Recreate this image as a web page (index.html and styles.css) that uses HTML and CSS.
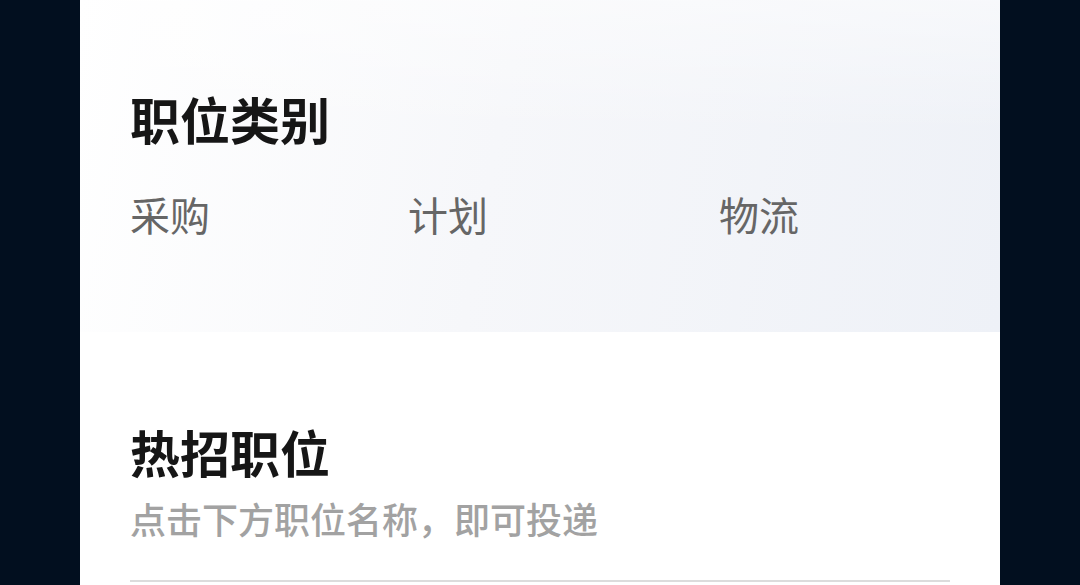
FILE: index.html
```html
<!DOCTYPE html>
<html lang="zh-CN">
<head>
  <meta charset="UTF-8">
  <meta name="viewport" content="width=device-width, initial-scale=1.0">
  <title>职位</title>
  <link rel="stylesheet" href="styles.css">
</head>
<body>
  <div class="page">
    <!-- 职位类别 -->
    <section class="category">
      <h2 class="section-title">职位类别</h2>
      <div class="category-list">
        <a href="#">采购</a>
        <a href="#">计划</a>
        <a href="#">物流</a>
      </div>
    </section>

    <!-- 热招职位 -->
    <section class="hot">
      <h2 class="section-title">热招职位</h2>
      <p class="hint">点击下方职位名称，即可投递</p>
      <div class="divider"></div>
    </section>
  </div>
</body>
</html>
```

FILE: styles.css
```css
/* Global */
body {
  margin: 0;
  background: #020f1f;
  font-family: "Noto Sans CJK SC", "Noto Sans", sans-serif;
  height: 100vh;
  overflow: hidden;
}
.page {
  width: 920px;
  margin-left: 80px;
  background: #ffffff;
  min-height: 100vh;
}

/* Headings */
.section-title {
  margin: 0;
  font-size: 50px;
  line-height: 60px;
  font-weight: 700;
  color: #161616;
}

/* Category block */
.category {
  height: 332px;
  box-sizing: border-box;
  padding: 88px 50px 0;
  background:
    linear-gradient(180deg, rgba(255, 255, 255, 0.5) 0%, rgba(255, 255, 255, 0) 40%),
    linear-gradient(100deg, #ffffff 0%, #f6f7fa 45%, #eef1f7 100%);
}
.category-list {
  display: grid;
  grid-template-columns: 278px 311px auto;
  margin-top: 42px;
}
.category-list a {
  font-size: 40px;
  line-height: 48px;
  color: #666666;
  text-decoration: none;
}

/* Hot jobs */
.hot {
  padding: 89px 50px 0;
}
.hint {
  margin: 16px 0 0;
  font-size: 36px;
  line-height: 43px;
  font-weight: 500;
  color: #a2a2a2;
}
.divider {
  margin-top: 40px;
  height: 2px;
  background: #dcdcdc;
}
```
